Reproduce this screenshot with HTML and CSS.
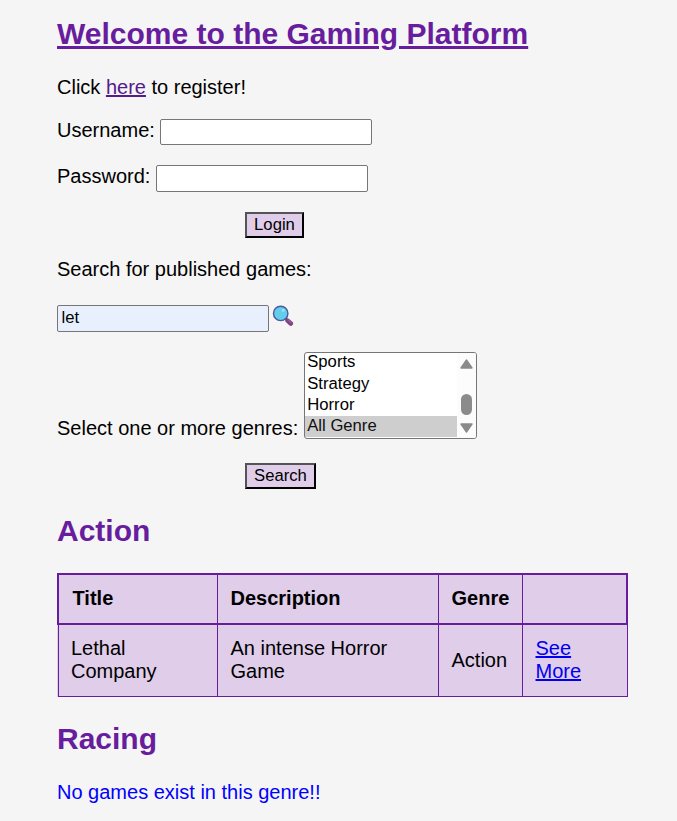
FILE: index.html
```html
<!DOCTYPE html>
<html lang="en">
<head>
<meta charset="utf-8">
<title>Gaming Platform</title>
<link rel="stylesheet" href="styles.css">
</head>
<body>
<h1 class="heading"><a class="home" href="#">Welcome to the Gaming Platform</a></h1>
<p class="intro">Click <a class="visited" href="#">here</a> to register!</p>
<form>
  <div class="field username"><label for="user">Username:</label><input id="user" type="text"></div>
  <div class="field password"><label for="pass">Password:</label><input id="pass" type="password"></div>
  <button class="button login" type="button">Login</button>
</form>
<form>
  <p class="search-label">Search for published games:</p>
  <div class="field search">
    <input class="filled" type="text" value="let" aria-label="Search">
    <svg class="lens" viewBox="0 0 22 22" width="22" height="22" aria-hidden="true">
      <path d="M13.2 13l2 2" stroke="#4c3b78" stroke-width="2"/>
      <path d="M15.6 15.6l3.2 2.9" stroke="#7d4382" stroke-width="4.6" stroke-linecap="round"/>
      <path d="M16.2 14.8l3 2.7" stroke="#97579b" stroke-width="1.6" stroke-linecap="round"/>
      <circle cx="8.7" cy="8.4" r="7.2" fill="#62cdec" stroke="#4c599a" stroke-width="1.4"/>
      <circle cx="11.2" cy="5.4" r="1.4" fill="#a1e7f7"/>
    </svg>
  </div>
  <div class="genres">
    <span class="genres-label">Select one or more genres:</span>
    <div class="listbox" role="listbox">
      <div class="options">
        <div class="option first">Sports</div>
        <div class="option">Strategy</div>
        <div class="option">Horror</div>
        <div class="option selected">All Genre</div>
      </div>
      <svg class="scrollbar" viewBox="0 0 19 85" width="19" height="85" aria-hidden="true">
        <path d="M9.5 7L15 15H4z" fill="#8b8b8b" stroke="#8b8b8b" stroke-width="1.4" stroke-linejoin="round"/>
        <rect x="4" y="41" width="11" height="21" rx="5.5" fill="#8b8b8b"/>
        <path d="M4 71H15L9.5 79z" fill="#8b8b8b" stroke="#8b8b8b" stroke-width="1.4" stroke-linejoin="round"/>
      </svg>
    </div>
  </div>
  <button class="button find" type="button">Search</button>
</form>
<h2 class="heading action">Action</h2>
<table>
  <colgroup><col class="c1"><col class="c2"><col class="c3"><col class="c4"></colgroup>
  <thead><tr><th class="lead">Title</th><th>Description</th><th>Genre</th><th></th></tr></thead>
  <tbody><tr><td>Lethal Company</td><td>An intense Horror Game</td><td>Action</td><td><a href="#">See<br>More</a></td></tr></tbody>
</table>
<h2 class="heading racing">Racing</h2>
<p class="empty">No games exist in this genre!!</p>
</body>
</html>
```
FILE: styles.css
```css
* { box-sizing: border-box; }
html { background: #f5f5f5; }
body {
  margin: 0;
  padding: 17px 49px 0 57px;
  height: 821px;
  overflow: hidden;
  font: 20px/23px "Liberation Sans", Arial, sans-serif;
  color: #000;
}
p { margin: 0; }
.heading { margin: 0; font-size: 30px; line-height: 34px; color: #671d9d; }
.home { color: #671d9d; text-decoration-thickness: 3px; }
.intro { margin-top: 25px; }
.visited { color: #551a8b; }
a { color: #0000ee; }
.field { display: flex; }
.username { margin-top: 20px; gap: 5px; height: 26px; }
.password { margin-top: 20px; gap: 6px; height: 27px; }
input {
  width: 212px;
  height: 100%;
  padding: 0 3.5px 1px;
  border: 1px solid #767676;
  border-radius: 2px;
  background: #fff;
  font: 16.67px "Liberation Sans", Arial, sans-serif;
}
.filled { background: #e8f0fe; }
.button {
  display: block;
  height: 26px;
  margin-left: 188px;
  padding: 0;
  border: 2px outset #000;
  border-radius: 0;
  background: #dfcde9;
  color: #000;
  font: 16.67px/20px "Liberation Sans", Arial, sans-serif;
}
.login { margin-top: 20px; width: 59px; }
.find { margin-top: 24px; width: 71px; }
.search-label { margin-top: 20px; }
.search { margin-top: 24px; gap: 3px; height: 27px; }
.genres { display: flex; align-items: flex-end; gap: 6px; height: 87px; margin-top: 20px; }
.genres-label { margin-bottom: -1px; }
.listbox {
  display: flex;
  width: 173px;
  height: 87px;
  border: 1px solid #767676;
  border-radius: 3px;
  background: #fff;
  overflow: hidden;
}
.options { display: flex; flex-direction: column; justify-content: flex-end; width: 152px; padding-bottom: 1px; }
.option { flex: 0 0 21px; padding-left: 2px; font-size: 16.67px; line-height: 19px; }
.first { flex-basis: 22px; }
.selected { background: #cecece; color: #101010; }
.scrollbar { background: #fcfcfc; }
.action { margin-top: 25px; }
table { width: 570px; margin-top: 25px; border-collapse: collapse; table-layout: fixed; background: #dfcde9; }
.c1 { width: 159px; }
.c2 { width: 221px; }
.c3 { width: 84px; }
.c4 { width: 105px; }
thead { border: 2px solid #671d9d; }
th, td { border: 1px solid #671d9d; padding: 12px; text-align: left; }
th { height: 50px; padding: 11px 12px 13px 13px; }
.lead { padding-left: 13.5px; }
td { height: 72px; padding-left: 12.5px; }
td + td { padding-left: 13px; }
.racing { margin-top: 25px; }
.empty { margin-top: 25px; color: #0000ff; }
```
